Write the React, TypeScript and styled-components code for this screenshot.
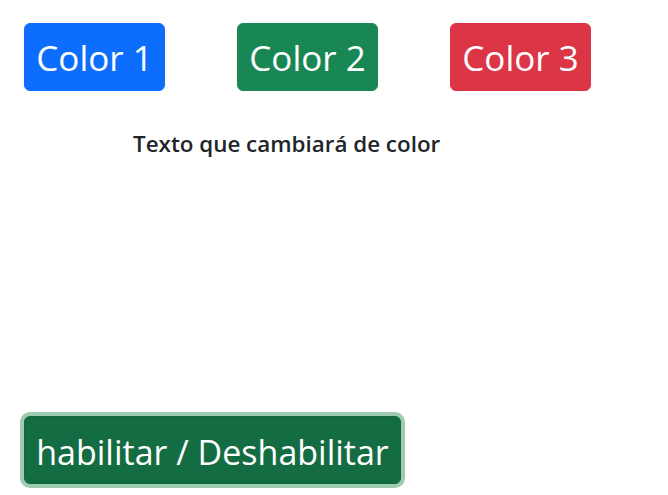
import React from "react";
import styled, { createGlobalStyle } from "styled-components";

const Global = createGlobalStyle`
  html, body { margin: 0; padding: 0; background: #fff; }
  body { font-family: "Open Sans", "Noto Sans", sans-serif; color: #212529; }
`;

const Page = styled.div`
  width: 668px;
  height: 495px;
  display: flex;
  flex-direction: column;
  padding: 23px 0 0 24px;
  box-sizing: border-box;
`;

const Row = styled.div`
  display: flex;
  gap: 72px;
`;

const Btn = styled.button<{ $bg: string }>`
  background: ${(p) => p.$bg};
  color: #fff;
  border: 1px solid ${(p) => p.$bg};
  border-radius: 6px;
  font-family: "Open Sans", "Noto Sans", sans-serif;
  font-size: 35px;
  line-height: 46px;
  height: 68px;
  padding: 2px 4px 0;
  box-sizing: border-box;
  width: 141px;
  cursor: pointer;
`;

const Label = styled.p`
  margin: 38px 0 0 109px;
  font-size: 22.4px;
  font-weight: 600;
  line-height: 30px;
  color: #212529;
`;

const Toggle = styled.button`
  margin-top: auto;
  margin-bottom: 11px;
  align-self: flex-start;
  background: #146c43;
  color: #fff;
  border: 1px solid #13653f;
  border-radius: 6px;
  box-shadow: 0 0 0 4px #9ccbb0;
  font-family: "Open Sans", "Noto Sans", sans-serif;
  font-size: 34px;
  height: 68px;
  width: 377px;
  padding: 3px 2px 0;
  box-sizing: border-box;
  white-space: nowrap;
`;

export default function App() {
  return (
    <>
      <Global />
      <Page>
        <Row>
          <Btn $bg="#0d6efd">Color 1</Btn>
          <Btn $bg="#198754">Color 2</Btn>
          <Btn $bg="#dc3545">Color 3</Btn>
        </Row>
        <Label>Texto que cambiará de color</Label>
        <Toggle>habilitar / Deshabilitar</Toggle>
      </Page>
    </>
  );
}
